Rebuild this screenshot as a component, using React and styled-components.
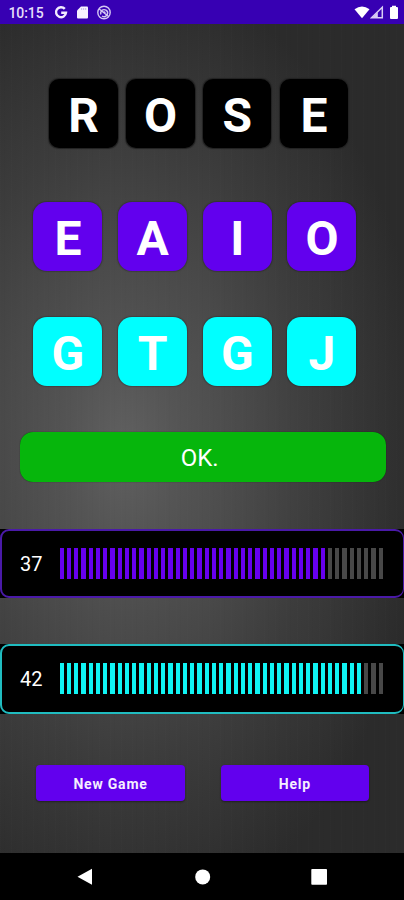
import React from "react";
import styled, { createGlobalStyle } from "styled-components";

const GlobalStyle = createGlobalStyle`
  *, *::before, *::after { box-sizing: border-box; }
  body { margin: 0; background: #000; font-family: Roboto, "Liberation Sans", sans-serif; }
  button { font: inherit; border: 0; margin: 0; padding: 0; }
`;

const Screen = styled.div`
  width: 404px;
  height: 900px;
  display: flex;
  flex-direction: column;
  overflow: hidden;
  color: #fff;
`;

const StatusBar = styled.header`
  height: 24px;
  flex: none;
  display: flex;
  align-items: center;
  justify-content: space-between;
  padding: 1px 5px 0 8.5px;
  background: #3700b3;
  color: #e6defa;
`;

const Clock = styled.span`
  width: 45.5px;
  font-size: 14px;
  line-height: 24px;
  font-weight: 500;
  letter-spacing: -0.1px;
`;

const StatusGroup = styled.div`
  display: flex;
  align-items: center;
`;

const StatusIcon = styled.svg`
  display: block;
  width: ${(p) => p.$w}px;
  height: 16px;
  margin-right: ${(p) => p.$gap || 0}px;
`;

const Board = styled.main`
  height: 829px;
  flex: none;
  display: flex;
  flex-direction: column;
  padding-top: 54.5px;
  background:
    repeating-linear-gradient(90deg, rgba(255,255,255,0.006) 0 1px, transparent 1px 4px, rgba(0,0,0,0.01) 4px 5px, transparent 5px 11px),
    radial-gradient(ellipse 300px 480px at 125px 425px, #606060 0%, #555 18%, #494949 42%, #3c3c3c 65%, #313131 88%, #2b2b2b 100%);
`;

const TileRow = styled.div`
  display: flex;
  gap: ${(p) => p.$gap}px;
  padding-left: ${(p) => p.$left}px;
  margin-bottom: ${(p) => p.$after}px;
`;

const tones = {
  black: "#000",
  purple: "#6200ee",
  cyan: "#00ffff",
};

const Tile = styled.button`
  width: ${(p) => (p.$tone === "black" ? 68.5 : 69)}px;
  height: 69px;
  padding: 4px 0 0;
  border-radius: ${(p) => (p.$tone === "black" ? 10 : 14)}px;
  background: ${(p) => tones[p.$tone]};
  box-shadow: 0 0 1px 0.5px ${(p) => (p.$tone === "black" ? "#222" : "rgba(20,20,20,0.25)")};
  color: #fff;
  font-size: 48px;
  line-height: 65px;
  font-weight: 700;
  text-align: center;
`;

const Message = styled.div`
  width: 365.5px;
  height: 50px;
  margin: 0 0 46.5px 20px;
  padding-right: 6px;
  border-radius: 13px;
  background: #06b60c;
  box-shadow: 0 0 1px rgba(0, 0, 0, 0.7);
  font-size: 24px;
  line-height: 52px;
  text-align: center;
`;

const MeterBand = styled.section`
  height: 69.5px;
  margin-bottom: ${(p) => p.$after}px;
  background: #000;
`;

const MeterFrame = styled.div`
  height: 100%;
  display: flex;
  align-items: center;
  padding-left: 18px;
  border: 2px solid ${(p) => p.$color};
  border-right-width: 1px;
  border-radius: 9px;
`;

const Score = styled.span`
  width: 39.5px;
  font-size: 20px;
  line-height: 24px;
  padding-top: 1px;
`;

const Bars = styled.div`
  display: flex;
  gap: 2.86px;
`;

const Bar = styled.i`
  width: 4.4px;
  height: 31px;
  background: ${(p) => p.$color};
`;

const Actions = styled.div`
  display: flex;
  gap: 36px;
  padding-left: 36.4px;
`;

const ActionButton = styled.button`
  width: 148.3px;
  height: 36px;
  padding-top: 2px;
  border-radius: 4px;
  background: #6200ee;
  box-shadow: 0 1px 2px rgba(0, 0, 0, 0.4);
  color: #f5efff;
  font-size: 14px;
  line-height: 35px;
  font-weight: 700;
  letter-spacing: 0.8px;
`;

const NavBar = styled.nav`
  height: 47px;
  flex: none;
  display: flex;
  justify-content: space-between;
  align-items: center;
  padding: 1px 76px;
  background: #000;
`;

const NavIcon = styled.svg`
  display: block;
  width: 17px;
  height: 18px;
  fill: #fff;
`;

const rows = [
  { letters: "ROSE", tone: "black", left: 49.4, gap: 8.3, after: 54 },
  { letters: "EAIO", tone: "purple", left: 33.4, gap: 15.7, after: 46.5 },
  { letters: "GTGJ", tone: "cyan", left: 33.4, gap: 15.7, after: 46 },
];

const meters = [
  { score: 37, bar: "#6700ee", border: "#4a1aa8", after: 46 },
  { score: 42, bar: "#10f4f4", border: "#20bcc0", after: 51.5 },
];

const BAR_COUNT = 45;

function Meter({ score, bar, border, after }) {
  return (
    <MeterBand $after={after}>
      <MeterFrame $color={border}>
        <Score>{score}</Score>
        <Bars>
          {Array.from({ length: BAR_COUNT }, (_, i) => (
            <Bar key={i} $color={i < score ? bar : "#484848"} />
          ))}
        </Bars>
      </MeterFrame>
    </MeterBand>
  );
}

export default function App() {
  return (
    <Screen>
      <GlobalStyle />
      <StatusBar>
        <StatusGroup>
          <Clock>10:15</Clock>
          <StatusIcon $w={14} $gap={8} viewBox="0 0 14 16">
            <path d="M10.800 3.900A5 5 0 1 0 12 7.700H7.200" fill="none" stroke="#f3edff" strokeWidth="2.4" />
          </StatusIcon>
          <StatusIcon $w={13} $gap={7} viewBox="0 0 13 16">
            <path d="M5 1.500H11a1 1 0 0 1 1 1v10a1 1 0 0 1-1 1H2a1 1 0 0 1-1-1V5.500z" fill="#f7f2ff" />
            <path d="M5.700 3v2M7.700 3v2M9.700 3v2" stroke="#b8a4e5" strokeWidth="0.8" />
          </StatusIcon>
          <StatusIcon $w={16} viewBox="0 0 16 16">
            <g fill="none" stroke="#d5c8f3" strokeWidth="1.4">
              <circle cx="8" cy="7.500" r="6.200" />
              <path d="M3.200 4 12.600 11.500M4.800 9.500C4 6 7 3.500 10 5.200c1.600 1 2 2.800 1.200 4.500M6 11c1.500 1 3.500.8 4.500-.5M7 7.500c.5-1 2-.8 2.200.3" />
            </g>
          </StatusIcon>
        </StatusGroup>
        <StatusGroup>
          <StatusIcon $w={16} viewBox="0 0 16 16">
            <path d="M.5 4.200Q8-1 15.500 4.200L8 13.200z" fill="#fff" />
          </StatusIcon>
          <StatusIcon $w={14} $gap={5} viewBox="0 0 14 16">
            <path d="M1.500 12.800 12.300 2.200v10.600z" fill="none" stroke="#d8ccf5" strokeWidth="1.500" />
            <path d="M7.800 7v5.800H2z" fill="#d8ccf5" />
          </StatusIcon>
          <StatusIcon $w={10} viewBox="0 0 10 16">
            <path d="M3 .8h4V2h1a1 1 0 0 1 1 1v10a1 1 0 0 1-1 1H2a1 1 0 0 1-1-1V3a1 1 0 0 1 1-1h1z" fill="#fff" />
          </StatusIcon>
        </StatusGroup>
      </StatusBar>
      <Board>
        {rows.map((row) => (
          <TileRow key={row.letters} $left={row.left} $gap={row.gap} $after={row.after}>
            {[...row.letters].map((letter, i) => (
              <Tile key={i} $tone={row.tone}>{letter}</Tile>
            ))}
          </TileRow>
        ))}
        <Message>OK.</Message>
        {meters.map((m) => (
          <Meter key={m.score} {...m} />
        ))}
        <Actions>
          <ActionButton>New Game</ActionButton>
          <ActionButton>Help</ActionButton>
        </Actions>
      </Board>
      <NavBar>
        <NavIcon viewBox="0 0 17 18"><path d="M1.500 8.800 16 .8v16z" /></NavIcon>
        <NavIcon viewBox="0 0 17 18"><circle cx="8.700" cy="8.900" r="7.500" /></NavIcon>
        <NavIcon viewBox="0 0 17 18"><rect x="0.300" y="1" width="15.700" height="15.800" rx="0.800" /></NavIcon>
      </NavBar>
    </Screen>
  );
}
